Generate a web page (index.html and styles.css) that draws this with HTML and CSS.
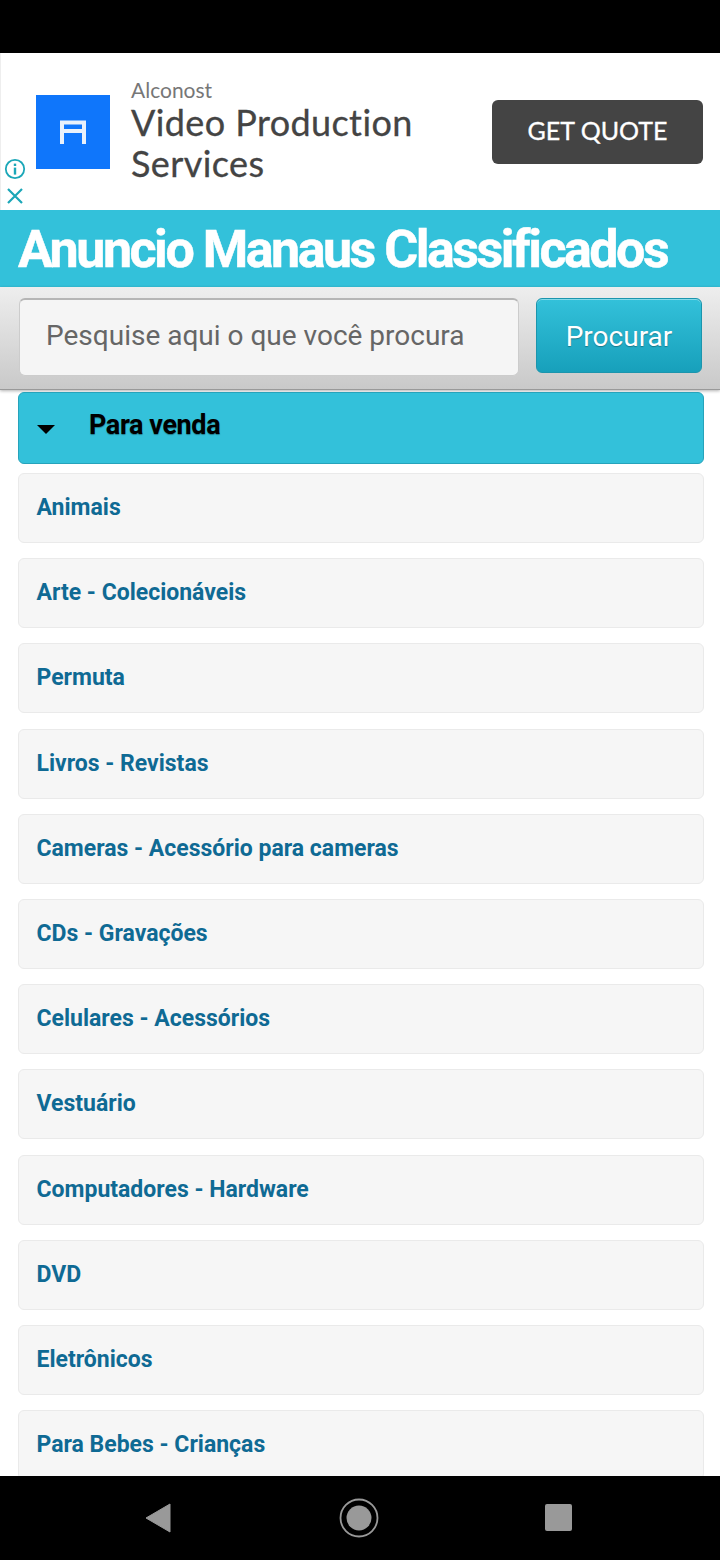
FILE: index.html
```html
<!DOCTYPE html>
<html>
  <head>
    <title>Anuncio Manaus Classificados</title>
    <link rel="stylesheet" href="styles.css">
  </head>
  <body>
    <div class="status-bar"></div>

    <div class="ad">
      <div class="ad-badges">
        <svg class="ad-icon" viewBox="0 0 22 22" width="22" height="22">
          <circle cx="11" cy="11" r="9.2" fill="none" stroke="#1ba7b8" stroke-width="1.8"/>
          <rect x="9.8" y="9.6" width="2.4" height="7" fill="#1ba7b8"/>
          <rect x="9.8" y="5.6" width="2.4" height="2.4" fill="#1ba7b8"/>
        </svg>
        <svg class="ad-icon" viewBox="0 0 22 22" width="22" height="22">
          <path d="M4 4 L18 18 M18 4 L4 18" fill="none" stroke="#1ba7b8" stroke-width="2.2"/>
        </svg>
      </div>
      <div class="ad-logo">
        <svg viewBox="0 0 26 24" width="26" height="24">
          <path d="M2 24 V2.5 H24 V24 M2 11 H24" fill="none" stroke="#e9f1fb" stroke-width="4"/>
        </svg>
      </div>
      <div class="ad-text">
        <div class="ad-brand">Alconost</div>
        <div class="ad-title">Video Production Services</div>
      </div>
      <div class="ad-button">GET QUOTE</div>
    </div>

    <div class="site-title">Anuncio Manaus Classificados</div>

    <form class="search">
      <input class="search-input" type="text" placeholder="Pesquise aqui o que você procura">
      <button class="search-button" type="button">Procurar</button>
    </form>

    <div class="content">
      <div class="section-head">
        <span class="caret"></span>
        <span class="section-name">Para venda</span>
      </div>
      <ul class="cat-list">
        <li><a href="#">Animais</a></li>
        <li><a href="#">Arte - Colecionáveis</a></li>
        <li><a href="#">Permuta</a></li>
        <li><a href="#">Livros - Revistas</a></li>
        <li><a href="#">Cameras - Acessório para cameras</a></li>
        <li><a href="#">CDs - Gravações</a></li>
        <li><a href="#">Celulares - Acessórios</a></li>
        <li><a href="#">Vestuário</a></li>
        <li><a href="#">Computadores - Hardware</a></li>
        <li><a href="#">DVD</a></li>
        <li><a href="#">Eletrônicos</a></li>
        <li><a href="#">Para Bebes - Crianças</a></li>
      </ul>
    </div>

    <div class="nav-bar">
      <svg viewBox="0 0 26 30" width="26" height="30">
        <path d="M1 15 L25 1 V29 Z" fill="#999" stroke="#999" stroke-width="1" stroke-linejoin="round"/>
      </svg>
      <svg viewBox="0 0 40 40" width="40" height="40">
        <circle cx="20" cy="20" r="18.5" fill="none" stroke="#999" stroke-width="1.8"/>
        <circle cx="20" cy="20" r="12.5" fill="#999"/>
      </svg>
      <div class="nav-square"></div>
    </div>
  </body>
</html>
```

FILE: styles.css
```css
* {
  box-sizing: border-box;
}

html, body {
  margin: 0;
  height: 1560px;
  overflow: hidden;
}

body {
  display: flex;
  flex-direction: column;
  font-family: Roboto, Arial, sans-serif;
  background-color: #fff;
}

.status-bar {
  height: 53px;
  background-color: #000;
}

/* ad banner */
.ad {
  position: relative;
  display: flex;
  align-items: center;
  height: 157px;
  padding-left: 36px;
  background-color: #fff;
  border-left: 1px solid #eee;
}

.ad-badges {
  position: absolute;
  left: 3px;
  bottom: 3px;
  display: flex;
  flex-direction: column;
  gap: 5px;
}

.ad-icon {
  display: block;
}

.ad-logo {
  display: flex;
  align-items: center;
  justify-content: center;
  width: 74px;
  height: 74px;
  margin-left: -1px;
  background-color: #0f76fb;
}

.ad-text {
  width: 351px;
  margin-left: 21px;
  margin-top: -2px;
  font-family: Lato, Arial, sans-serif;
  color: #444;
}

.ad-brand {
  font-size: 21px;
  line-height: 25px;
  color: #777;
}

.ad-title {
  width: 330px;
  font-size: 36px;
  line-height: 41px;
  letter-spacing: 0.4px;
  -webkit-text-stroke: 0.3px #444;
}

.ad-button {
  width: 211px;
  height: 64px;
  margin-left: 10px;
  line-height: 60px;
  text-align: center;
  font-family: Lato, Arial, sans-serif;
  font-size: 25px;
  color: #fff;
  background-color: #444;
  border-radius: 6px;
  -webkit-text-stroke: 0.3px #fff;
}

/* header */
.site-title {
  height: 77px;
  padding-left: 18px;
  padding-top: 1px;
  line-height: 77px;
  font-size: 52px;
  font-weight: 700;
  letter-spacing: -2.5px;
  white-space: nowrap;
  color: #fff;
  background-color: #33c1da;
  -webkit-text-stroke: 0.5px #fff;
}

.search {
  display: flex;
  align-items: flex-start;
  height: 103px;
  padding: 11px 18px 0 19px;
  background: linear-gradient(#eeeeee, #c9c9c9);
  border-bottom: 1px solid #999;
  box-shadow: 0 1px 3px rgba(0, 0, 0, 0.3);
}

.search-input {
  width: 500px;
  height: 78px;
  padding: 0 26px 4px;
  font-family: Roboto, Arial, sans-serif;
  font-size: 28px;
  background-color: #f5f5f5;
  border: 1px solid #ccc;
  border-top: 2px solid #b5b5b5;
  border-radius: 6px;
}

.search-input::placeholder {
  color: #666;
  opacity: 1;
}

.search-button {
  width: 166px;
  height: 75px;
  margin-left: 17px;
  padding-top: 3px;
  font-family: Roboto, Arial, sans-serif;
  font-size: 28px;
  color: #fff;
  background: linear-gradient(#33c1da, #17a0bb);
  border: 1px solid #1b95ad;
  border-radius: 6px;
  text-shadow: 0 1px 1px rgba(0, 0, 0, 0.3);
  box-shadow: inset 0 1px 0 rgba(255, 255, 255, 0.4);
}

/* list */
.content {
  flex: 1;
  overflow: hidden;
  padding: 2px 16px 0 18px;
}

.section-head {
  display: flex;
  align-items: center;
  height: 72px;
  padding-left: 18px;
  background-color: #33c1da;
  border: 1px solid #27a3bb;
  border-radius: 6px;
}

.caret {
  width: 0;
  height: 0;
  margin-top: 2px;
  border-left: 9px solid transparent;
  border-right: 9px solid transparent;
  border-top: 9px solid #000;
}

.section-name {
  margin-left: 34px;
  margin-top: -6px;
  font-size: 27px;
  font-weight: 700;
  letter-spacing: -0.4px;
  color: #000;
  text-shadow: 0 1px 1px rgba(0, 0, 0, 0.35);
}

.cat-list {
  display: flex;
  flex-direction: column;
  gap: 15.2px;
  margin: 9px 0 0;
  padding: 0;
  list-style: none;
}

.cat-list li {
  height: 70px;
  flex: none;
  padding-left: 17.5px;
  line-height: 68px;
  background-color: #f6f6f6;
  border: 1px solid #eaeaea;
  border-radius: 6px;
}

.cat-list a {
  font-size: 23px;
  font-weight: 700;
  color: #0f6a94;
  text-decoration: none;
}

/* phone buttons */
.nav-bar {
  position: relative;
  flex: none;
  height: 84px;
  background-color: #000;
  display: flex;
  align-items: center;
  padding-left: 145px;
}

.nav-bar svg:nth-child(2) {
  margin-left: 168px;
}

.nav-square {
  width: 27px;
  height: 27px;
  margin-left: 166px;
  margin-top: -2px;
  background-color: #999;
  border-radius: 2px;
}
```
